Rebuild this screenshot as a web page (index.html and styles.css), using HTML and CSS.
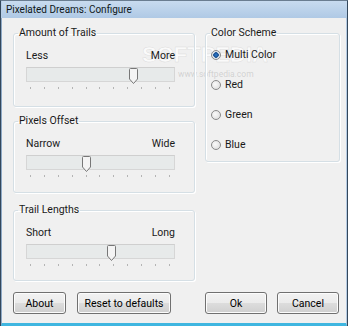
FILE: index.html
```html
<!DOCTYPE html>
<html>
<head>
<meta charset="utf-8">
<link rel="stylesheet" href="styles.css">
</head>
<body>
<div class="window">
  <div class="titlebar">Pixelated Dreams: Configure</div>
  <div class="client">
    <div class="wm-big">SOFTPEDIA</div>
    <div class="wm-small">www.softpedia.com</div>
    <div class="main">
      <div class="leftcol">
        <fieldset class="group g1">
          <legend>Amount of Trails</legend>
          <div class="slider">
            <div class="labels"><span>Less</span><span>More</span></div>
            <div class="track"><svg class="thumb" style="left:102px" width="9" height="16" viewBox="0 0 9 16"><path d="M0.5 1.5 Q0.5 0.5 1.5 0.5 H7.5 Q8.5 0.5 8.5 1.5 V11 L4.5 15.5 L0.5 11 Z" fill="#f4f4f4" stroke="#777"/></svg></div>
            <div class="ticks"><i></i><i></i><i></i><i></i><i></i><i></i><i></i><i></i><i></i><i></i><i></i></div>
          </div>
        </fieldset>
        <fieldset class="group g2">
          <legend>Pixels Offset</legend>
          <div class="slider">
            <div class="labels"><span>Narrow</span><span>Wide</span></div>
            <div class="track"><svg class="thumb" style="left:55px" width="9" height="16" viewBox="0 0 9 16"><path d="M0.5 1.5 Q0.5 0.5 1.5 0.5 H7.5 Q8.5 0.5 8.5 1.5 V11 L4.5 15.5 L0.5 11 Z" fill="#f4f4f4" stroke="#777"/></svg></div>
            <div class="ticks"><i></i><i></i><i></i><i></i><i></i><i></i><i></i><i></i><i></i><i></i><i></i></div>
          </div>
        </fieldset>
        <fieldset class="group g3">
          <legend>Trail Lengths</legend>
          <div class="slider">
            <div class="labels"><span>Short</span><span>Long</span></div>
            <div class="track"><svg class="thumb" style="left:80px" width="9" height="16" viewBox="0 0 9 16"><path d="M0.5 1.5 Q0.5 0.5 1.5 0.5 H7.5 Q8.5 0.5 8.5 1.5 V11 L4.5 15.5 L0.5 11 Z" fill="#f4f4f4" stroke="#777"/></svg></div>
            <div class="ticks"><i></i><i></i><i></i><i></i><i></i><i></i><i></i><i></i><i></i><i></i><i></i></div>
          </div>
        </fieldset>
      </div>
      <div class="rightcol">
        <fieldset class="group scheme">
          <legend>Color Scheme</legend>
          <label class="radio"><span class="circle checked"></span>Multi Color</label>
          <label class="radio"><span class="circle"></span>Red</label>
          <label class="radio"><span class="circle"></span>Green</label>
          <label class="radio"><span class="circle"></span>Blue</label>
        </fieldset>
      </div>
    </div>
    <div class="buttons">
      <div class="btngroup left">
        <button class="btn about">About</button>
        <button class="btn reset">Reset to defaults</button>
      </div>
      <div class="btngroup right">
        <button class="btn ok">Ok</button>
        <button class="btn cancel">Cancel</button>
      </div>
    </div>
  </div>
</div>
</body>
</html>
```

FILE: styles.css
```css
* { box-sizing: border-box; }
html, body { margin: 0; padding: 0; background: #ffffff; }
body {
  font-family: Roboto, "Open Sans", "DejaVu Sans", sans-serif;
  font-size: 10.5px;
  color: #1a1a1a;
  width: 350px;
  height: 326px;
  overflow: hidden;
}
.window {
  width: 348px;
  height: 326px;
  display: flex;
  flex-direction: column;
  background: #f0f0f0;
  border-left: 1px solid #33475b;
  border-right: 1px solid #33475b;
  border-top: 1px solid #6a7d90;
  box-shadow: inset 1px 0 #9fb8d2, inset -1px 0 #47c7e6;
}
.titlebar {
  height: 17px;
  flex: none;
  padding: 1px 0 0 4px;
  line-height: 16px;
  font-size: 10px;
  color: #101820;
  background: linear-gradient(#c8dbef, #afc9e5);
  border-left: 1px solid #b7cde6;
}
.client {
  position: relative;
  flex: 1;
  display: flex;
  flex-direction: column;
  padding: 8px 8px 0 11px;
  border-left: 1px solid #8ea9c6;
  border-right: 1px solid #b5cbe3;
  border-bottom: 3px solid #3fb6e0;
}
.main {
  position: relative;
  z-index: 1;
  display: grid;
  grid-template-columns: 182px 135px;
  column-gap: 10px;
}
.leftcol { display: flex; flex-direction: column; gap: 7px; }
.group {
  margin: 0;
  padding: 0 19px 0 12px;
  min-width: 0;
  border: 1px solid #d5dfe5;
  border-radius: 3px;
  box-shadow: inset 1px 1px #fff, 1px 1px #fff;
}
.group legend {
  padding: 0 1px;
  margin-left: -8px;
  line-height: 14px;
}
.g1 { height: 81px; }
.g2 { height: 79px; }
.g3 { height: 78px; margin-top: 3px; }
.slider { padding-top: 9px; }
.labels {
  display: flex;
  justify-content: space-between;
  line-height: 14px;
  height: 14px;
}
.track {
  position: relative;
  margin-top: 4px;
  height: 15px;
  background: #e7eaea;
  border: 1px solid #d6d6d6;
  border-top-color: #cfcfcf;
}
.thumb { position: absolute; top: 0; }
.ticks {
  display: flex;
  justify-content: space-between;
  padding: 0 5px 0 4px;
  margin-top: 5px;
  height: 2px;
}
.ticks i { display: block; width: 1px; height: 2px; background: #b4b4b4; }
.scheme {
  height: 136px;
  padding: 8px 6px 0 5px;
}
.scheme legend { margin-left: -1px; }
.radio {
  display: flex;
  align-items: center;
  gap: 4px;
  height: 14px;
  line-height: 14px;
  margin-bottom: 16px;
}
.circle {
  width: 10px;
  height: 10px;
  border-radius: 50%;
  border: 1px solid #8a8a8a;
  background: radial-gradient(circle at 40% 40%, #fafafa, #d8d8d8);
  flex: none;
}
.circle.checked {
  background: radial-gradient(circle, #2b7bd0 0, #1b4f8e 2.5px, #dde4ea 3px, #f2f2f2 100%);
}
.buttons {
  display: grid;
  grid-template-columns: 182px 135px;
  column-gap: 10px;
  margin-top: 11px;
}
.btngroup { display: flex; gap: 11px; }
.btngroup.right { gap: 10px; }
.btn {
  font-family: inherit;
  font-size: 10.5px;
  color: #000;
  height: 22px;
  padding: 0;
  border: 1px solid #707070;
  border-radius: 3px;
  background: linear-gradient(#f2f2f2 0, #ebebeb 50%, #dddddd 50%, #cfcfcf 100%);
  box-shadow: inset 0 0 0 1px #fcfcfc;
}
.about { width: 53px; }
.reset { width: 94px; }
.ok, .cancel { width: 62px; }
.wm-big {
  position: absolute;
  z-index: 0;
  left: 140px;
  top: 24px;
  font-family: "Liberation Sans", sans-serif;
  font-weight: bold;
  font-size: 22px;
  line-height: 26px;
  color: rgba(255,255,255,0.7);
  -webkit-text-stroke: 0.5px rgba(190,190,190,0.45);
  pointer-events: none;
}
.wm-small {
  position: absolute;
  z-index: 0;
  left: 176px;
  top: 51px;
  font-size: 8.5px;
  color: rgba(150,150,150,0.35);
  pointer-events: none;
}
```
